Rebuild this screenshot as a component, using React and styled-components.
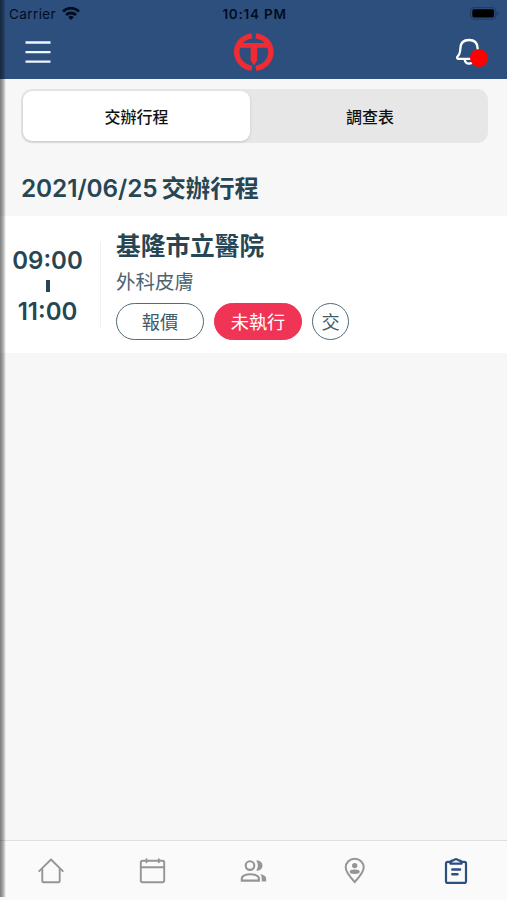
import React, { useState } from "react";
import styled, { createGlobalStyle } from "styled-components";

const SCHEDULES = [
  {
    id: 1,
    start: "09:00",
    end: "11:00",
    name: "基隆市立醫院",
    department: "外科皮膚",
    purpose: "報價",
    status: "未執行",
    mark: "交",
  },
];

const WifiIcon = () => (
  <svg width="18" height="14" viewBox="0 0 18 14" fill="none" stroke="#000d1f" strokeWidth="2.8">
    <path d="M1 4.500a11.400 11.400 0 0 1 16 0" />
    <path d="M4 8a7.200 7.200 0 0 1 10 0" />
    <path d="M9 12.900 6.200 10.200a4 4 0 0 1 5.600 0z" fill="#000d1f" stroke="none" />
  </svg>
);

const BatteryIcon = () => (
  <svg width="30" height="13" viewBox="0 0 30 13">
    <rect x="0.6" y="0.6" width="25.200" height="11.600" rx="3.400" fill="none" stroke="#1d3b64" strokeWidth="1" />
    <rect x="2.300" y="2.200" width="21.800" height="8.400" rx="1.800" fill="#000" />
    <path d="M27.200 4.300c2 .8 2 3.400 0 4.200z" fill="#1d3b64" />
  </svg>
);

const MenuIcon = () => (
  <svg width="26" height="24" viewBox="0 0 26 24" stroke="#eef6ff" strokeWidth="2.400">
    <path d="M0.500 2.500h25M0.500 12.100h25M0.500 21.600h25" />
  </svg>
);

const Logo = () => (
  <svg width="40" height="38" viewBox="0 0 40 38" fill="none" stroke="#ef2b34">
    <path d="M17.800 2.900A17 16.200 0 0 0 17.800 35.100" strokeWidth="5.400" />
    <path d="M21.800 2.900A17 16.200 0 0 1 21.800 35.100" strokeWidth="5.400" />
    <path d="M4.500 12.400h31" strokeWidth="4.800" />
    <path d="M16.600 12v15.200l3.300 5.400 3.300-5.400V12z" fill="#ef2b34" stroke="none" />
  </svg>
);

const BellIcon = () => (
  <svg width="27" height="28" viewBox="0 0 27 28" fill="none" stroke="#fff" strokeWidth="2.300" strokeLinecap="round" strokeLinejoin="round">
    <path d="M13 2C7.400 2 4.600 5.400 4.400 10c-.2 4.300-.5 6.400-2.600 8.200-1.300 1.300-.6 2.700.8 2.700h20.800c1.400 0 2.100-1.400.8-2.700-2.100-1.800-2.400-3.900-2.600-8.200C21.400 5.400 18.600 2 13 2z" />
    <path d="M8.600 21.200c.5 2.900 2.100 4.500 4.400 4.500s3.900-1.600 4.400-4.500" />
  </svg>
);

const HomeIcon = () => (
  <svg width="28" height="28" viewBox="0 0 28 28" fill="none" stroke="currentColor" strokeWidth="1.900" strokeLinecap="round" strokeLinejoin="round">
    <path d="M2.200 14.100 14 2.500l11.800 11.600" />
    <path d="M5.300 12v12.200c0 .6.400 1 1 1h15.400c.6 0 1-.4 1-1V12" />
  </svg>
);

const CalendarIcon = () => (
  <svg width="28" height="28" viewBox="0 0 28 28" fill="none" stroke="currentColor" strokeWidth="1.900" strokeLinecap="round">
    <rect x="2.800" y="3.800" width="23.400" height="21.400" rx="1.800" />
    <path d="M2.800 10.200h23.400M8.500 2.200v3M20.800 2.200v3" />
  </svg>
);

const PeopleIcon = () => (
  <svg width="28" height="28" viewBox="0 0 28 28" fill="none" stroke="currentColor" strokeWidth="2.100">
    <circle cx="10" cy="8.600" r="4.300" />
    <path d="M1.800 23.600v-2.100c0-2.700 4.300-4.200 8.500-4.200s8.600 1.500 8.600 4.200v2.100z" />
    <path d="M16.200 3.600c3.300-.6 6.300 1.700 6.300 5s-3 5.600-6.300 5c2.300-3 2.300-7 0-10z" fill="currentColor" stroke="none" />
    <path d="M20.200 16.900c3.600.7 6 2.300 6 4.600v3.100h-4.500v-3.100c0-1.800-.4-3.400-1.500-4.600z" fill="currentColor" stroke="none" />
  </svg>
);

const LocationIcon = () => (
  <svg width="28" height="28" viewBox="0 0 28 28" fill="none" stroke="currentColor" strokeWidth="2">
    <path d="M13.700 25c-4-4.200-9-9.800-9-14.400a9 8.900 0 0 1 18 0c0 4.600-5 10.200-9 14.400z" />
    <circle cx="13.700" cy="8.600" r="2.700" fill="currentColor" stroke="none" />
    <ellipse cx="13.700" cy="14.800" rx="5" ry="2.200" fill="currentColor" stroke="none" />
  </svg>
);

const ClipboardIcon = () => (
  <svg width="28" height="28" viewBox="0 0 28 28" fill="none" stroke="currentColor" strokeWidth="2.200" strokeLinecap="round" strokeLinejoin="round">
    <path d="M9 4.800H5.700A1.700 1.700 0 0 0 4 6.500v17.700c0 .9.800 1.700 1.700 1.700h16.600c.9 0 1.700-.8 1.700-1.700V6.500c0-.9-.8-1.700-1.700-1.700H19" />
    <path d="M8.300 6.600c0-2.400 1.500-3.200 3.600-3.400 1-1.400 3.200-1.400 4.200 0 2.100.2 3.600 1 3.600 3.400z" />
    <path d="M10.300 12.500h7.800M10.300 17.300h5.200" strokeWidth="2.400" />
  </svg>
);

const NAV_ITEMS = [
  { key: "home", Icon: HomeIcon },
  { key: "calendar", Icon: CalendarIcon },
  { key: "people", Icon: PeopleIcon },
  { key: "location", Icon: LocationIcon },
  { key: "clipboard", Icon: ClipboardIcon },
];

const App = () => {
  const [tab, setTab] = useState("assigned");
  const [page, setPage] = useState("clipboard");

  return (
    <Container>
      <GlobalStyle />
      <Header>
        <StatusBar>
          <Carrier>
            Carrier <WifiIcon />
          </Carrier>
          <Clock>10:14 PM</Clock>
          <Battery>
            <BatteryIcon />
          </Battery>
        </StatusBar>
        <Toolbar>
          <IconButton aria-label="menu">
            <MenuIcon />
          </IconButton>
          <Logo />
          <BellButton aria-label="notifications">
            <BellIcon />
            <Badge />
          </BellButton>
        </Toolbar>
      </Header>
      <Content>
        <Tabs>
          <Tab $active={tab === "assigned"} onClick={() => setTab("assigned")}>
            交辦行程
          </Tab>
          <Tab $active={tab === "survey"} onClick={() => setTab("survey")}>
            調查表
          </Tab>
        </Tabs>
        <DateTitle>2021/06/25 交辦行程</DateTitle>
        {SCHEDULES.map((item) => (
          <Schedule key={item.id}>
            <TimeRange>
              <span>{item.start}</span>
              <TimeLine />
              <span>{item.end}</span>
            </TimeRange>
            <Info>
              <Name>{item.name}</Name>
              <Department>{item.department}</Department>
              <Tags>
                <Tag>{item.purpose}</Tag>
                <Tag $filled>{item.status}</Tag>
                <RoundTag>{item.mark}</RoundTag>
              </Tags>
            </Info>
          </Schedule>
        ))}
      </Content>
      <BottomNav>
        {NAV_ITEMS.map(({ key, Icon }) => (
          <NavButton
            key={key}
            aria-label={key}
            $active={page === key}
            onClick={() => setPage(key)}
          >
            <Icon />
          </NavButton>
        ))}
      </BottomNav>
      <EdgeShadow />
    </Container>
  );
};

export default App;

const GlobalStyle = createGlobalStyle`
  * {
    box-sizing: border-box;
  }

  body {
    margin: 0;
    font-family: Inter, "Noto Sans CJK TC", sans-serif;
  }

  button {
    padding: 0;
    border: none;
    background: none;
    font-family: inherit;
    cursor: pointer;
  }

  svg {
    display: block;
  }
`;

const Container = styled.div`
  display: flex;
  flex-direction: column;
  position: relative;
  height: 100vh;
  overflow: hidden;
  background: #f7f7f7;
  color: #264653;
`;

const Header = styled.header`
  height: 79px;
  flex-shrink: 0;
  background: #2d4f7e;
`;

const StatusBar = styled.div`
  display: grid;
  grid-template-columns: 1fr auto 1fr;
  align-items: center;
  height: 27px;
  padding: 0 7px 0 9px;
  color: #000d1f;
  font-size: 13.5px;
`;

const Carrier = styled.div`
  display: flex;
  align-items: center;
  gap: 6px;
  letter-spacing: 0.4px;
`;

const Clock = styled.div`
  font-size: 13.5px;
  font-weight: 600;
  letter-spacing: 0.75px;
`;

const Battery = styled.div`
  display: flex;
  justify-content: flex-end;
`;

const Toolbar = styled.div`
  display: grid;
  grid-template-columns: 1fr auto 1fr;
  align-items: center;
  height: 50px;
  padding: 0 24px 0 25px;
`;

const IconButton = styled.button`
  justify-self: start;
`;

const BellButton = styled.button`
  position: relative;
  justify-self: end;
`;

const Badge = styled.span`
  position: absolute;
  top: 11px;
  right: -5px;
  width: 18px;
  height: 18px;
  border-radius: 50%;
  background: #ff0000;
`;

const Content = styled.main`
  flex: 1;
  padding-top: 10px;
`;

const Tabs = styled.div`
  display: flex;
  height: 54px;
  margin: 0 19px 0 21px;
  padding: 2px;
  border-radius: 11px;
  background: #e7e7e7;
`;

const Tab = styled.button`
  flex: ${({ $active }) => ($active ? "0 0 227px" : "1")};
  padding: ${({ $active }) => ($active ? "0 0 1px" : "0 0 1px 4px")};
  border-radius: 9px;
  background: ${({ $active }) => ($active ? "#fff" : "transparent")};
  box-shadow: ${({ $active }) => ($active ? "0 1px 3px rgba(0, 0, 0, 0.15)" : "none")};
  color: #111;
  font-size: 16px;
  font-weight: 500;
`;

const DateTitle = styled.h1`
  margin: 0;
  padding-left: 21px;
  height: 73px;
  line-height: 91px;
  font-size: 24.4px;
  font-weight: 600;
  letter-spacing: -0.1px;
  word-spacing: -2px;
`;

const Schedule = styled.section`
  display: flex;
  align-items: center;
  height: 137px;
  background: #fff;
`;

const TimeRange = styled.div`
  display: flex;
  flex-direction: column;
  align-items: center;
  justify-content: center;
  width: 101px;
  height: 86px;
  padding: 2px 5px 0 0;
  border-right: 1px solid #f1f1f1;
  font-size: 24px;
  font-weight: 600;
  line-height: 31px;
`;

const TimeLine = styled.div`
  width: 4px;
  height: 12px;
  margin: 4px 0;
  background: #264653;
`;

const Info = styled.div`
  padding-left: 15px;
`;

const Name = styled.h2`
  margin: 0;
  line-height: 35px;
  font-size: 24.7px;
  font-weight: 600;
`;

const Department = styled.div`
  line-height: 37px;
  color: #4c6470;
  font-size: 19.5px;
`;

const Tags = styled.div`
  display: flex;
  gap: 10px;
  margin-top: 2px;
`;

const Tag = styled.span`
  width: 88px;
  height: 37px;
  border: 1.5px solid ${({ $filled }) => ($filled ? "#f03455" : "#536b76")};
  border-radius: 19px;
  background: ${({ $filled }) => ($filled ? "#f03455" : "#fff")};
  color: ${({ $filled }) => ($filled ? "#fff" : "#405c69")};
  font-size: 18.2px;
  line-height: 36px;
  text-align: center;
`;

const RoundTag = styled(Tag)`
  width: 37px;
`;

const BottomNav = styled.nav`
  display: flex;
  height: 60px;
  flex-shrink: 0;
  border-top: 1px solid #dedede;
  background: #fafafa;
`;

const NavButton = styled.button`
  display: flex;
  flex: 1;
  align-items: center;
  justify-content: center;
  color: ${({ $active }) => ($active ? "#2d4f7e" : "#959595")};
`;

// soft shadow along the left side of the page
const EdgeShadow = styled.div`
  position: absolute;
  top: 0;
  left: 0;
  width: 6px;
  height: 897px;
  background: linear-gradient(to right, rgba(0, 0, 0, 0.5), rgba(0, 0, 0, 0.33) 50%, transparent);
  pointer-events: none;
`;
